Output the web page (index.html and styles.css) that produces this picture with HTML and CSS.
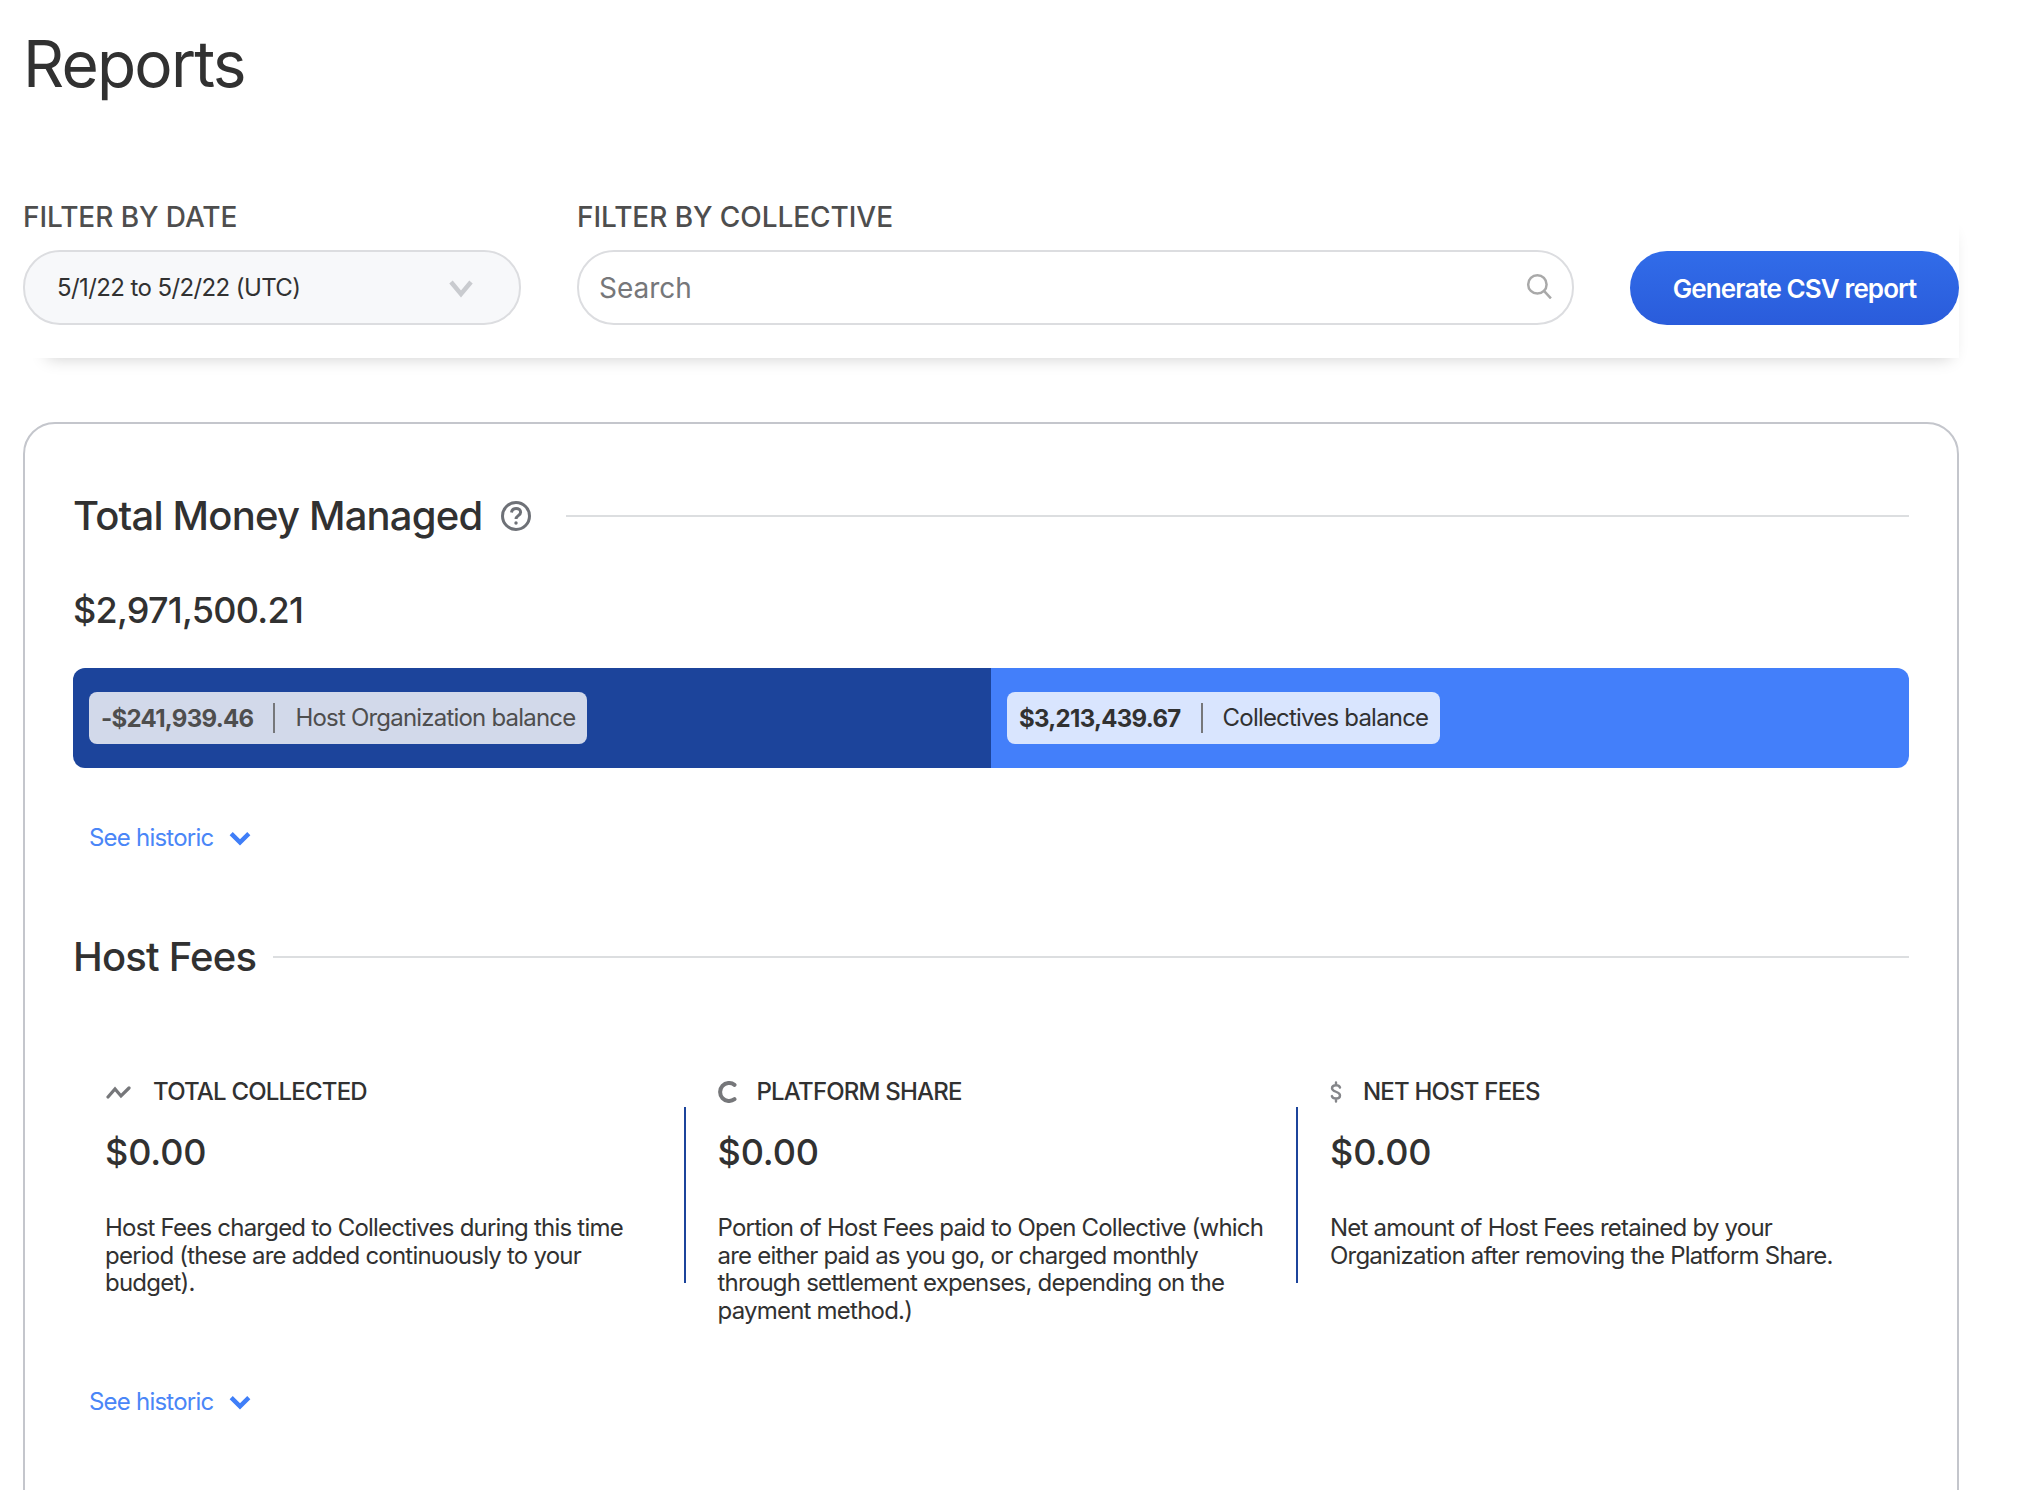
FILE: index.html
```html
<!DOCTYPE html>
<html lang="en">
<head>
    <meta charset="UTF-8">
    <title>Reports</title>
    <link rel="stylesheet" href="styles.css">
</head>
<body>
    <div class="page">
        <h1 class="page-title">Reports</h1>

        <form class="filters">
            <div class="filter filter-date">
                <label class="filter-label">FILTER BY DATE</label>
                <div class="date-select">
                    <span>5/1/22 to 5/2/22 (UTC)</span>
                    <svg class="date-chevron" viewBox="0 0 24 24"><path d="M2 6l10 12L22 6" /></svg>
                </div>
            </div>
            <div class="filter filter-collective">
                <label class="filter-label" for="collective">FILTER BY COLLECTIVE</label>
                <div class="search-box">
                    <input id="collective" class="search-input" type="text" placeholder="Search">
                    <svg class="search-icon" viewBox="0 0 24 24"><circle cx="10.5" cy="10.5" r="8.5" /><path d="M17 17l6 6.5" /></svg>
                </div>
            </div>
            <button type="button" class="csv-button">Generate CSV report</button>
        </form>

        <main class="card">
            <div class="section-head section-head-first">
                <h2 class="section-title">Total Money Managed</h2>
                <svg class="help-icon" viewBox="0 0 32 32">
                    <circle cx="16" cy="16" r="13.5" />
                    <path d="M11.5 12.5c.3-2.7 2.200-4 4.600-4 2.500 0 4.500 1.500 4.500 3.800 0 3.400-4.600 3.300-4.600 6.700" />
                    <circle class="help-dot" cx="16" cy="23" r="1.700" />
                </svg>
                <div class="section-line"></div>
            </div>

            <div class="total">$2,971,500.21</div>

            <div class="balance-bar">
                <div class="balance balance-host">
                    <div class="pill pill-host">
                        <strong class="pill-amount">-$241,939.46</strong>
                        <span class="pill-label">Host Organization balance</span>
                    </div>
                </div>
                <div class="balance balance-collectives">
                    <div class="pill pill-collectives">
                        <strong class="pill-amount">$3,213,439.67</strong>
                        <span class="pill-label">Collectives balance</span>
                    </div>
                </div>
            </div>

            <a class="historic historic-first">See historic
                <svg class="historic-chevron" viewBox="0 0 20 14"><path d="M2 3l8 8 8-8" /></svg>
            </a>

            <div class="section-head section-head-fees">
                <h2 class="section-title">Host Fees</h2>
                <div class="section-line"></div>
            </div>

            <div class="stats">
                <div class="stat">
                    <div class="stat-label">
                        <svg class="stat-icon icon-trend" viewBox="0 0 26 16"><path d="M3 13l7-8 6 7 8-8" /></svg>
                        TOTAL COLLECTED
                    </div>
                    <div class="stat-value">$0.00</div>
                    <p class="stat-text">Host Fees charged to Collectives during this time period (these are added continuously to your budget).</p>
                </div>
                <div class="stat-divider"></div>
                <div class="stat">
                    <div class="stat-label">
                        <svg class="stat-icon icon-share" viewBox="0 0 20 22"><path d="M16.500 3.800A9 9 0 1 0 16.500 18.200" /></svg>
                        PLATFORM SHARE
                    </div>
                    <div class="stat-value">$0.00</div>
                    <p class="stat-text">Portion of Host Fees paid to Open Collective (which are either paid as you go, or charged monthly through settlement expenses, depending on the payment method.)</p>
                </div>
                <div class="stat-divider"></div>
                <div class="stat">
                    <div class="stat-label">
                        <svg class="stat-icon icon-net" viewBox="0 0 12 22"><path d="M10 6.500C9.500 5 8 4.200 6 4.200c-2.500 0-4 1.200-4 3 0 4.100 8 3 8 7.200 0 1.900-1.600 3.100-4 3.100-2.100 0-3.600-.8-4.100-2.400M6 1.500v2.700M6 17.500v3" /></svg>
                        NET HOST FEES
                    </div>
                    <div class="stat-value">$0.00</div>
                    <p class="stat-text">Net amount of Host Fees retained by your Organization after removing the Platform Share.</p>
                </div>
            </div>

            <a class="historic">See historic
                <svg class="historic-chevron" viewBox="0 0 20 14"><path d="M2 3l8 8 8-8" /></svg>
            </a>
        </main>
    </div>
</body>
</html>
```

FILE: styles.css
```css
html, body {
    margin: 0;
    height: 1490px;
    overflow: hidden;
    background-color: #fff;
}

body {
    font-family: Inter, "Liberation Sans", sans-serif;
    color: #313131;
}

.page {
    width: 1936px;
    margin-left: 23px;
}

.page-title {
    margin: 0;
    padding-top: 24px;
    font-size: 64px;
    line-height: 80px;
    font-weight: 400;
    letter-spacing: -1.800px;
}

/* filters */
.filters {
    display: flex;
    align-items: flex-end;
    margin-top: 99px;
    padding-bottom: 33px;
    background-color: #fff;
    box-shadow: 8px 16px 16px -16px rgba(0, 0, 0, 0.2);
}

.filter {
    display: flex;
    flex-direction: column;
}

.filter-date {
    width: 498px;
    margin-right: 56px;
}

.filter-collective {
    width: 997px;
    margin-right: 56px;
}

.filter-label {
    margin-bottom: 19px;
    font-size: 28px;
    line-height: 28px;
    font-weight: 500;
    color: #4e4e4e;
    letter-spacing: -0.060px;
}

.date-select {
    display: flex;
    align-items: center;
    justify-content: space-between;
    box-sizing: border-box;
    height: 75px;
    padding: 0 46px 0 32px;
    background-color: #f7f8fa;
    border: 2px solid #dcdde0;
    border-radius: 37px;
    font-size: 24px;
    color: #313131;
    letter-spacing: -0.600px;
}

.date-chevron {
    width: 24px;
    height: 24px;
    fill: none;
    stroke: #c9cbcf;
    stroke-width: 4.500;
}

.search-box {
    display: flex;
    align-items: center;
    box-sizing: border-box;
    height: 75px;
    padding: 0 20px;
    border: 2px solid #dcdde0;
    border-radius: 37px;
}

.search-input {
    flex: 1;
    border: none;
    outline: none;
    padding: 0;
    font-family: inherit;
    font-size: 28px;
    color: #313131;
}

.search-input::placeholder {
    color: #76777a;
    opacity: 1;
}

.search-icon {
    width: 26px;
    height: 26px;
    margin-top: -4px;
    fill: none;
    stroke: #a9a9a9;
    stroke-width: 2.300;
}

.csv-button {
    width: 329px;
    height: 74px;
    padding: 0;
    border: none;
    border-radius: 37px;
    background: linear-gradient(180deg, #316ce9 0%, #2a5cdb 100%);
    color: #fff;
    font-family: inherit;
    font-size: 26px;
    font-weight: 600;
    letter-spacing: -0.900px;
}

/* main card */
.card {
    box-sizing: border-box;
    height: 1300px;
    margin-top: 64px;
    padding: 0 48px;
    border: 2px solid #c4c6cc;
    border-radius: 32px;
}

.section-head {
    display: flex;
    align-items: center;
}

.section-head-first {
    margin-top: 67px;
}

.section-head-fees {
    margin-top: 79px;
}

.section-title {
    margin: 0;
    font-size: 40px;
    line-height: 50px;
    font-weight: 500;
    letter-spacing: -0.800px;
}

.section-line {
    flex: 1;
    height: 2px;
    margin-left: 17px;
    background-color: #dcdee0;
}

.help-icon {
    width: 32px;
    height: 32px;
    margin-left: 18px;
    margin-right: 17px;
    fill: none;
    stroke: #6e7177;
    stroke-width: 3;
}

.help-dot {
    fill: #6e7177;
    stroke: none;
}

.total {
    margin-top: 47px;
    font-size: 36px;
    line-height: 44px;
    font-weight: 500;
    letter-spacing: -0.750px;
}

.balance-bar {
    display: flex;
    height: 100px;
    margin-top: 36px;
    border-radius: 12px;
    overflow: hidden;
}

.balance {
    display: flex;
    align-items: center;
    box-sizing: border-box;
    padding-left: 16px;
}

.balance-host {
    width: 918px;
    background-color: #1c449b;
}

.balance-collectives {
    flex: 1;
    background-color: #437ffa;
}

.pill {
    display: flex;
    align-items: center;
    height: 52px;
    padding: 0 12px;
    border-radius: 8px;
    font-size: 24px;
    color: #4e4e4e;
    letter-spacing: -0.800px;
}

.pill-host {
    background-color: #d2d9ea;
}

.pill-collectives {
    background-color: #d9e5fe;
    color: #313131;
}

.pill-amount {
    padding-right: 20px;
    font-weight: 700;
    letter-spacing: -0.700px;
}

.pill-label {
    padding-left: 20px;
    border-left: 2px solid #76777a;
    line-height: 30px;
}

.historic {
    display: flex;
    align-items: center;
    margin-left: 16px;
    font-size: 24px;
    line-height: 30px;
    color: #4a86f7;
    letter-spacing: -0.780px;
}

.historic-first {
    margin-top: 55px;
}

.historic-chevron {
    width: 22px;
    height: 16px;
    margin-left: 16px;
    fill: none;
    stroke: #3f7ef8;
    stroke-width: 4;
}

/* host fee stats */
.stats {
    display: flex;
    margin-top: 95px;
    margin-bottom: 63px;
    padding-left: 32px;
}

.stat {
    width: 549.500px;
}

.stat-divider {
    width: 2px;
    height: 176px;
    margin: 30px 32px 0 29px;
    background-color: #1c449b;
}

.stat-label {
    display: flex;
    align-items: center;
    font-size: 24px;
    line-height: 30px;
    font-weight: 500;
    letter-spacing: -0.800px;
}

.stat-icon {
    fill: none;
    stroke: #76777a;
    stroke-linecap: round;
}

.icon-trend {
    width: 26px;
    height: 16px;
    margin-right: 22px;
    stroke-width: 3.200;
}

.icon-share {
    width: 20px;
    height: 22px;
    margin-right: 19px;
    stroke-width: 4;
}

.icon-net {
    width: 12px;
    height: 22px;
    margin-right: 21px;
    stroke-width: 2.400;
    stroke: #85868a;
}

.stat-value {
    margin-top: 23px;
    font-size: 36px;
    line-height: 44px;
    font-weight: 500;
    letter-spacing: -0.100px;
}

.stat-text {
    margin: 40px 0 0;
    font-size: 24px;
    line-height: 27.500px;
    letter-spacing: -0.780px;
}
```
